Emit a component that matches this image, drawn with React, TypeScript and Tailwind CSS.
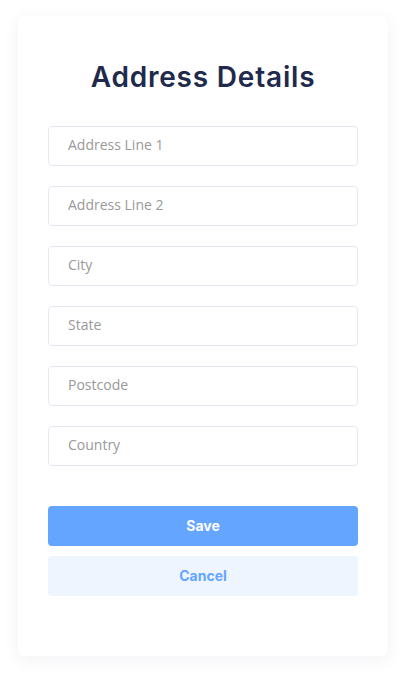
import React from 'react';

const fields = ['Address Line 1', 'Address Line 2', 'City', 'State', 'Postcode', 'Country'];

const App = () => {
  return (
    <div className="min-h-[676px] w-full bg-white pt-4 px-[18px]">
      <div className="w-[370px] h-[640px] bg-white rounded-md shadow-[0_4px_18px_rgba(30,40,90,0.06)] px-[30px] pt-[44px]">
        <h1
          className="text-center text-[#1f2a4d] text-[28px] leading-[34px] font-semibold tracking-[0.8px] mb-[32px]"
          style={{ fontFamily: 'Inter, "Liberation Sans", sans-serif' }}
        >
          Address Details
        </h1>
        <div className="flex flex-col gap-5">
          {fields.map((f) => (
            <input
              key={f}
              type="text"
              placeholder={f}
              className="h-10 w-full rounded border border-[#e4e8f5] bg-white pl-[19px] pr-5 pb-1 text-sm text-[#333] placeholder:text-[#999] outline-none"
              style={{ fontFamily: '"Open Sans", sans-serif' }}
            />
          ))}
        </div>
        <div className="mt-10 flex flex-col gap-[10px]" style={{ fontFamily: 'Inter, sans-serif' }}>
          <button className="h-10 w-full rounded bg-[#64a5ff] text-white text-sm font-bold">Save</button>
          <button className="h-10 w-full rounded bg-[#eff5ff] text-[#64a5ff] text-sm font-bold">Cancel</button>
        </div>
      </div>
    </div>
  );
};

export default App;
